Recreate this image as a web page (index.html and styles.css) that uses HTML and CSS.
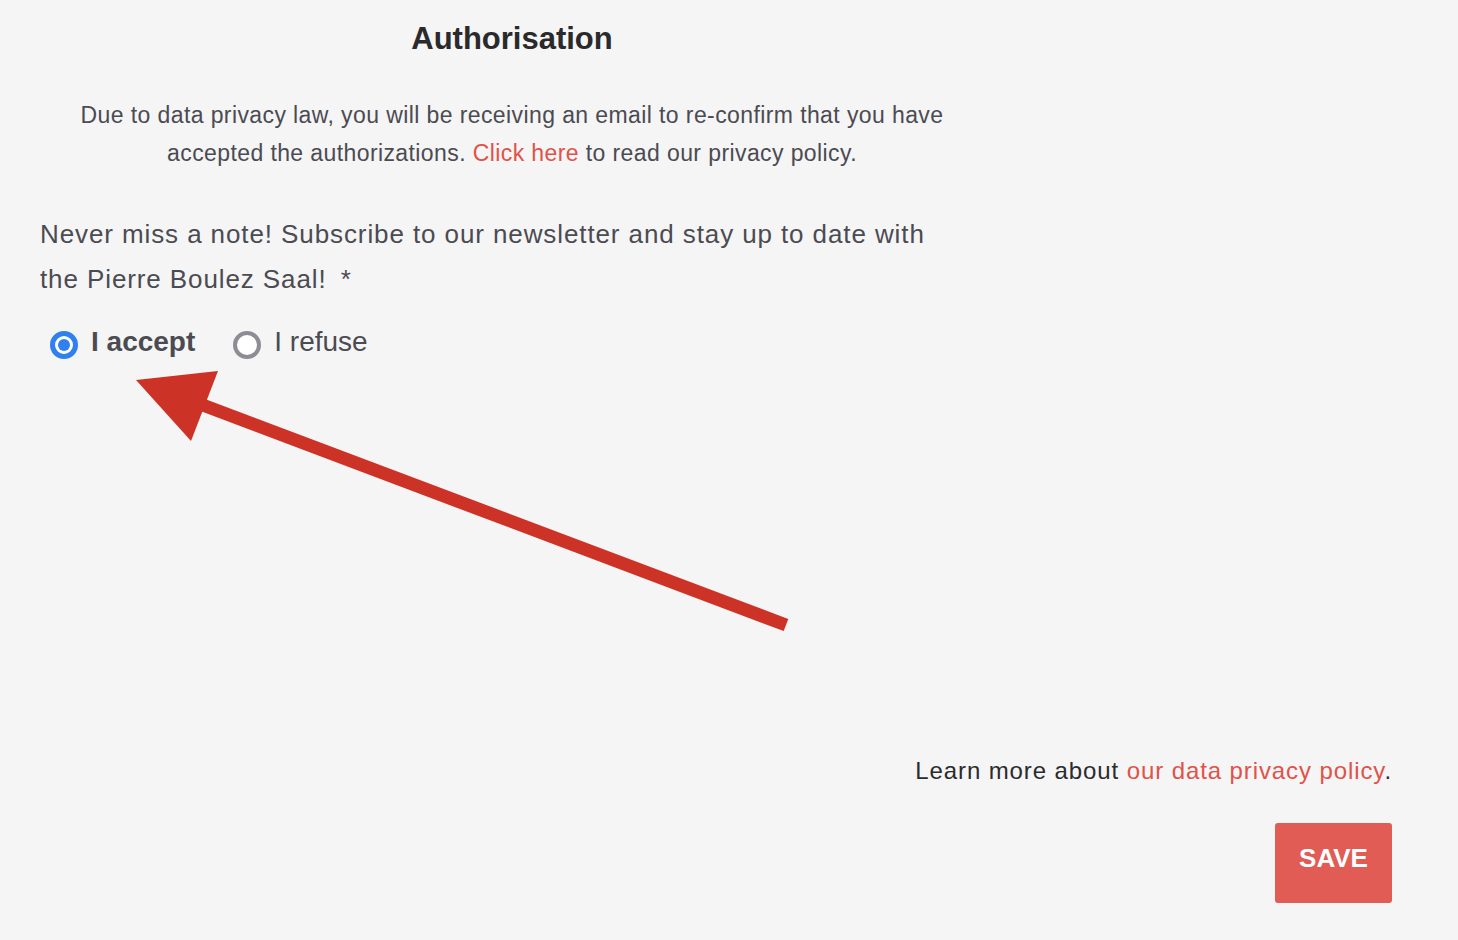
FILE: index.html
```html
<!DOCTYPE html>
<html lang="en">
<head>
    <meta charset="UTF-8">
    <meta name="viewport" content="width=device-width, initial-scale=1.0">
    <title>Authorisation</title>
    <link rel="stylesheet" href="styles.css">
</head>
<body>
    <div class="page">
        <section class="authorisation">
            <h1>Authorisation</h1>
            <p class="notice">
                Due to data privacy law, you will be receiving an email to re-confirm that you have<br>
                accepted the authorizations. <a href="#">Click here</a> to read our privacy policy.
            </p>
            <p class="question">
                Never miss a note! Subscribe to our newsletter and stay up to date with<br>
                the Pierre Boulez Saal! <span class="required">*</span>
            </p>
            <div class="choices">
                <label class="choice checked"><span class="radio"></span>I accept</label>
                <label class="choice"><span class="radio"></span>I refuse</label>
            </div>
        </section>

        <footer class="form-footer">
            <p class="learn-more">Learn more about <a href="#">our data privacy policy</a>.</p>
            <button class="save-btn" type="button">SAVE</button>
        </footer>

        <!-- flecha de anotacion -->
        <svg class="arrow" width="1458" height="940" viewBox="0 0 1458 940">
            <line x1="200" y1="404" x2="786" y2="625" stroke="#cd3227" stroke-width="13"/>
            <polygon points="136,380 218,371 191,441" fill="#cd3227"/>
        </svg>
    </div>
</body>
</html>
```

FILE: styles.css
```css
body {
    margin: 0;
    padding: 0;
    background-color: #f5f5f5;
    font-family: 'Liberation Sans', Arial, Helvetica, sans-serif;
    color: #4b4b52;
}

.page {
    position: relative;
    padding: 20px 66px 0 40px;
    height: 940px;
    box-sizing: border-box;
}

.authorisation {
    width: 944px;
}

h1 {
    margin: 0;
    font-size: 31px;
    line-height: 38px;
    text-align: center;
    color: #2a2a2c;
}

.notice {
    margin: 38px 0 0;
    font-size: 23px;
    letter-spacing: 0.4px;
    line-height: 38px;
    text-align: center;
}

a {
    color: #e0524a;
    text-decoration: none;
}

.question {
    margin: 40px 0 0;
    font-size: 26px;
    letter-spacing: 0.9px;
    line-height: 45px;
}

.required {
    margin-left: 6px;
}

.choices {
    display: flex;
    align-items: center;
    gap: 38px;
    margin-top: 20px;
    padding-left: 10px;
    height: 40px;
}

.choice {
    display: flex;
    align-items: center;
    gap: 13px;
    font-size: 28px;
}

.choice.checked {
    font-weight: bold;
}

.radio {
    width: 28px;
    height: 28px;
    border: 4px solid #8e8d96;
    border-radius: 50%;
    background-color: #ffffff;
    box-sizing: border-box;
    margin-top: 6px;
    position: relative;
}

.checked .radio {
    border: 5px solid #3080f0;
}

.checked .radio::after {
    content: "";
    position: absolute;
    left: 3px;
    top: 3px;
    width: 12px;
    height: 12px;
    border-radius: 50%;
    background-color: #3080f0;
}

.form-footer {
    display: flex;
    flex-direction: column;
    align-items: flex-end;
    margin-top: 394px;
}

.learn-more {
    margin: 0;
    font-size: 24px;
    letter-spacing: 0.9px;
    line-height: 30px;
    color: #2b2b2d;
}

.save-btn {
    margin-top: 37px;
    width: 117px;
    height: 80px;
    border: none;
    border-radius: 3px;
    background-color: #e05c55;
    color: #ffffff;
    font-family: 'Liberation Sans', Arial, Helvetica, sans-serif;
    font-size: 26px;
    font-weight: bold;
    padding-bottom: 10px;
}

.arrow {
    position: absolute;
    left: 0;
    top: 0;
    pointer-events: none;
}
```
